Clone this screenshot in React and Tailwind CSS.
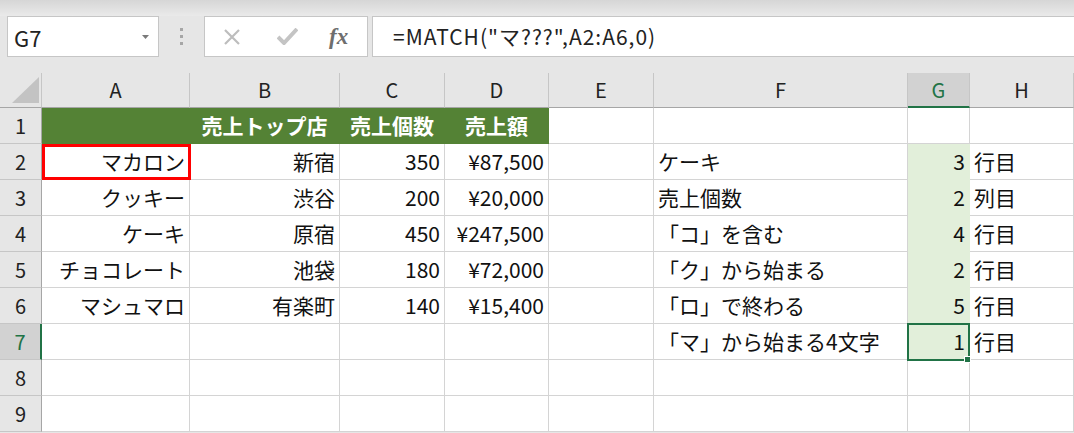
import React from "react";

const cols = [
  { key: "A", w: "w-[148px]" },
  { key: "B", w: "w-[150px]" },
  { key: "C", w: "w-[105px]" },
  { key: "D", w: "w-[104px]" },
  { key: "E", w: "w-[105px]" },
  { key: "F", w: "w-[254px]" },
  { key: "G", w: "w-[62px]" },
  { key: "H", w: "w-[104px]" },
];

// each row: [A, B, C, D, E, F, G, H]
const rows = [
  ["", "売上トップ店", "売上個数", "売上額", "", "", "", ""],
  ["マカロン", "新宿", "350", "¥87,500", "", "ケーキ", "3", "行目"],
  ["クッキー", "渋谷", "200", "¥20,000", "", "売上個数", "2", "列目"],
  ["ケーキ", "原宿", "450", "¥247,500", "", "「コ」を含む", "4", "行目"],
  ["チョコレート", "池袋", "180", "¥72,000", "", "「ク」から始まる", "2", "行目"],
  ["マシュマロ", "有楽町", "140", "¥15,400", "", "「ロ」で終わる", "5", "行目"],
  ["", "", "", "", "", "「マ」から始まる4文字", "1", "行目"],
  ["", "", "", "", "", "", "", ""],
  ["", "", "", "", "", "", "", ""],
];

const leftCols = ["F", "H"];

function Cell({ row, col, value }) {
  const header = row === 1 && ["A", "B", "C", "D"].includes(col.key);
  const filled = col.key === "G" && row >= 2 && row <= 7;

  let cls = `${col.w} shrink-0 h-[36px] relative flex items-center border-r border-b px-[4px] whitespace-nowrap`;
  if (header) {
    cls += " bg-[#548235] border-[#548235] text-white font-bold justify-center";
  } else if (filled) {
    cls += " bg-[#e2efda] border-[#e2efda] justify-end";
  } else {
    cls += " bg-white border-[#d4d4d4]";
    cls += leftCols.includes(col.key) ? " justify-start" : " justify-end";
  }

  return (
    <div className={cls}>
      <span className="leading-none">{value}</span>
      {row === 2 && col.key === "A" && (
        <div className="absolute left-0 top-0 right-[-2px] bottom-[-1px] border-[3px] border-[#ff0000] z-10" />
      )}
      {row === 7 && col.key === "G" && (
        <>
          <div className="absolute left-[-1px] top-[-1px] right-[-1px] bottom-[-2px] border-2 border-[#217346] z-10" />
          <div className="absolute right-[-2px] bottom-[-4px] w-[7px] h-[7px] bg-[#217346] border border-white z-20" />
        </>
      )}
    </div>
  );
}

export default function App() {
  return (
    <div
      className="w-[1074px] h-[433px] overflow-hidden bg-[#e6e6e6] text-[#111]"
      style={{ fontFamily: '"Noto Sans CJK JP", "Noto Sans", sans-serif' }}
    >
      {/* top strip */}
      <div className="h-[16px] bg-gradient-to-b from-[#d6d6d6] to-[#eaeaea]" />

      {/* name box + formula bar */}
      <div className="h-[41px] flex items-stretch pl-[7px]">
        <div className="w-[152px] bg-white border border-[#c6c6c6] flex items-center justify-between pl-[6px] pr-[9px]">
          <span className="text-[22px] text-[#222] leading-none">G7</span>
          <svg width="7" height="4" viewBox="0 0 7 4">
            <polygon points="0,0 7,0 3.5,4" fill="#7a7a7a" />
          </svg>
        </div>
        <div className="w-[45px] flex flex-col items-center justify-center gap-[4px]">
          <div className="w-[3px] h-[3px] bg-[#a6a6a6]" />
          <div className="w-[3px] h-[3px] bg-[#a6a6a6]" />
          <div className="w-[3px] h-[3px] bg-[#a6a6a6]" />
        </div>
        <div className="w-[164px] bg-white border border-[#c6c6c6] flex items-center">
          <svg className="ml-[18px]" width="18" height="16" viewBox="0 0 18 16">
            <path d="M2 1 L16 15 M16 1 L2 15" stroke="#bdbdbd" strokeWidth="2.2" fill="none" />
          </svg>
          <svg className="ml-[36px]" width="21" height="17" viewBox="0 0 21 17">
            <path d="M1 9 L7 15 L20 1" stroke="#c4c4c4" strokeWidth="4" fill="none" />
          </svg>
          <span
            className="ml-[31px] text-[23px] italic font-bold text-[#6e6e6e] leading-none"
            style={{ fontFamily: '"Liberation Serif", serif' }}
          >
            fx
          </span>
        </div>
        <div className="ml-[4px] flex-1 bg-white border border-r-0 border-[#c6c6c6] flex items-center pl-[20px]">
          <span className="text-[21px] tracking-[1px] text-[#222] leading-none">=MATCH("マ???",A2:A6,0)</span>
        </div>
      </div>

      <div className="h-[16px]" />

      {/* column headers */}
      <div className="flex h-[35px] text-[20px] text-[#222]">
        <div className="w-[42px] shrink-0 border-r border-b border-r-[#c6c6c6] border-b-[#a6a6a6] relative">
          <svg className="absolute left-[11px] top-[3px]" width="29" height="28" viewBox="0 0 29 28">
            <polygon points="1,27 28,27 28,1" fill="#c3c3c3" />
          </svg>
        </div>
        {cols.map((c) => (
          <div
            key={c.key}
            className={`${c.w} shrink-0 flex items-center justify-center border-r border-r-[#c6c6c6] ${
              c.key === "G"
                ? "bg-[#d2d2d2] text-[#217346] border-b-2 border-b-[#217346]"
                : "border-b border-b-[#a6a6a6]"
            }`}
          >
            <span className="leading-none">{c.key}</span>
          </div>
        ))}
      </div>

      {/* rows */}
      {rows.map((r, i) => {
        const n = i + 1;
        return (
          <div key={n} className="flex text-[21px]">
            <div
              className={`w-[42px] shrink-0 h-[36px] flex items-center justify-center border-b border-b-[#c6c6c6] text-[20px] ${
                n === 7
                  ? "bg-[#d2d2d2] text-[#217346] border-r-2 border-r-[#217346]"
                  : "text-[#222] border-r border-r-[#a6a6a6]"
              }`}
            >
              <span className="leading-none">{n}</span>
            </div>
            {cols.map((c, j) => (
              <Cell key={c.key} row={n} col={c} value={r[j]} />
            ))}
          </div>
        );
      })}
    </div>
  );
}
